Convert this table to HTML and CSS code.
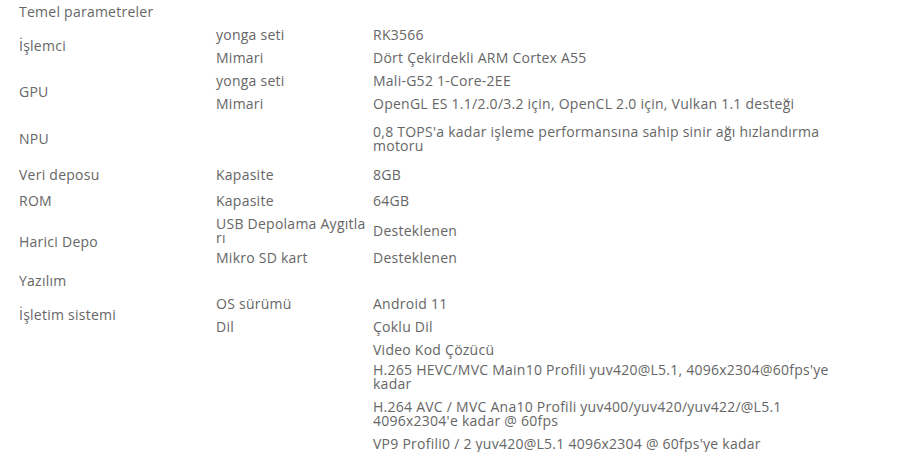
FILE: index.html
```html
<!DOCTYPE html>
<html lang="tr">
<head>
    <meta charset="UTF-8">
    <meta name="viewport" content="width=device-width, initial-scale=1.0">
    <title>Teknik Özellikler</title>
    <link rel="stylesheet" href="styles.css">
</head>
<body>
    <table class="spec-table">
        <colgroup>
            <col class="col-group">
            <col class="col-name">
            <col class="col-value">
        </colgroup>
        <tr class="section">
            <td colspan="3">Temel parametreler</td>
        </tr>
        <tr>
            <td rowspan="2">İşlemci</td>
            <td>yonga seti</td>
            <td>RK3566</td>
        </tr>
        <tr>
            <td>Mimari</td>
            <td>Dört Çekirdekli ARM Cortex A55</td>
        </tr>
        <tr>
            <td rowspan="2">GPU</td>
            <td>yonga seti</td>
            <td>Mali-G52 1-Core-2EE</td>
        </tr>
        <tr>
            <td>Mimari</td>
            <td>OpenGL ES 1.1/2.0/3.2 için, OpenCL 2.0 için, Vulkan 1.1 desteği</td>
        </tr>
        <tr class="row-npu">
            <td>NPU</td>
            <td></td>
            <td>0,8 TOPS'a kadar işleme performansına sahip sinir ağı hızlandırma motoru</td>
        </tr>
        <tr>
            <td>Veri deposu</td>
            <td>Kapasite</td>
            <td>8GB</td>
        </tr>
        <tr class="row-rom">
            <td>ROM</td>
            <td>Kapasite</td>
            <td>64GB</td>
        </tr>
        <tr class="row-wrap">
            <td rowspan="2">Harici Depo</td>
            <td>USB Depolama Aygıtları</td>
            <td>Desteklenen</td>
        </tr>
        <tr>
            <td>Mikro SD kart</td>
            <td>Desteklenen</td>
        </tr>
        <tr class="section">
            <td colspan="3">Yazılım</td>
        </tr>
        <tr>
            <td rowspan="2">İşletim sistemi</td>
            <td>OS sürümü</td>
            <td>Android 11</td>
        </tr>
        <tr>
            <td>Dil</td>
            <td>Çoklu Dil</td>
        </tr>
        <tr>
            <td></td>
            <td></td>
            <td>Video Kod Çözücü</td>
        </tr>
        <tr class="row-wrap">
            <td></td>
            <td></td>
            <td>H.265 HEVC/MVC Main10 Profili yuv420@L5.1, 4096x2304@60fps'ye kadar</td>
        </tr>
        <tr class="row-h264">
            <td></td>
            <td></td>
            <td>H.264 AVC / MVC Ana10 Profili yuv400/yuv420/yuv422/@L5.1 4096x2304'e kadar @ 60fps</td>
        </tr>
        <tr class="row-vp9">
            <td></td>
            <td></td>
            <td>VP9 Profili0 / 2 yuv420@L5.1 4096x2304 @ 60fps'ye kadar</td>
        </tr>
    </table>
</body>
</html>
```

FILE: styles.css
```css
body {
    margin: 0;
    padding: 0 11px;
    background: #fff;
    font-family: "Open Sans", sans-serif;
    font-size: 14px;
    letter-spacing: 0.25px;
    color: #666;
}
.spec-table {
    width: 827px;
    table-layout: fixed;
    border-collapse: collapse;
}
.col-group {
    width: 197px;
}
.col-name {
    width: 161px;
}
.col-value {
    width: 469px;
}
.spec-table tr {
    height: 23px;
}
.spec-table td {
    padding: 0 8px;
    line-height: 14px;
    vertical-align: middle;
}
.spec-table td:nth-last-child(2) {
    padding-right: 0;
    word-break: break-all;
}
.spec-table td:last-child {
    padding-left: 4px;
}
.spec-table .section td {
    padding-left: 8px;
}
.spec-table .row-npu td {
    padding-top: 10px;
    padding-bottom: 10px;
}
.spec-table .row-rom {
    height: 29px;
}
.spec-table .row-wrap {
    height: 31px;
}
.spec-table .row-h264 {
    height: 37px;
}
.spec-table .row-h264 td {
    padding-top: 7px;
}
.spec-table .row-vp9 td {
    padding-top: 6px;
}
```
